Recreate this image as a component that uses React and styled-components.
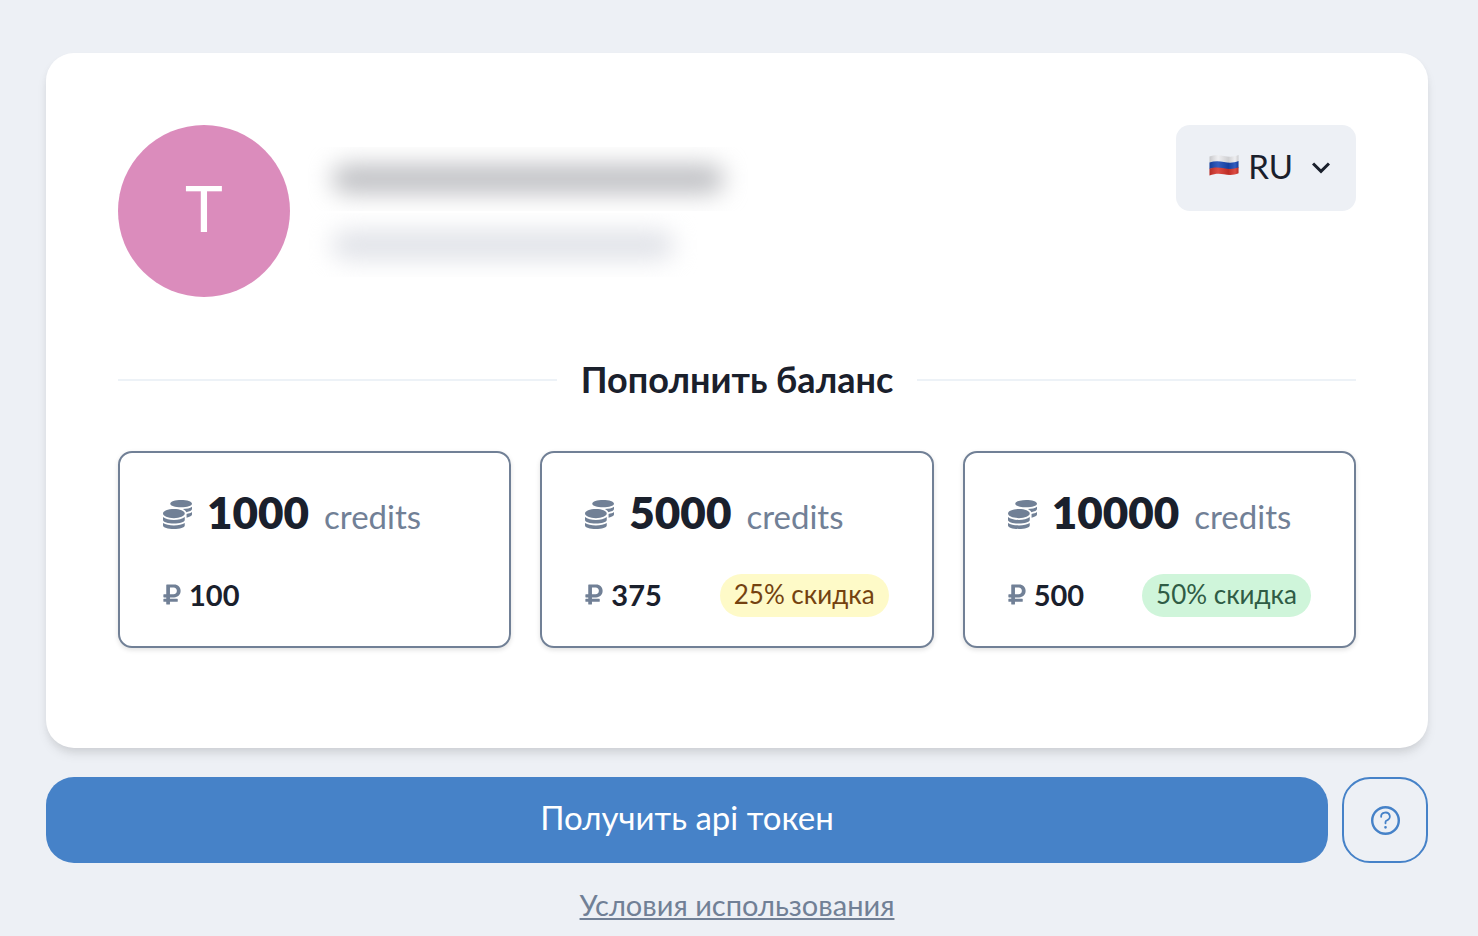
import React from "react";
import styled, { createGlobalStyle } from "styled-components";
import { FaCoins, FaRubleSign } from "react-icons/fa";

const GlobalStyle = createGlobalStyle`
  *, *::before, *::after { box-sizing: border-box; }
  body {
    margin: 0;
    background: #edf0f5;
    color: #1a202c;
    font-family: Lato, "Open Sans", sans-serif;
  }
  button { font: inherit; cursor: pointer; }
  h1, p { margin: 0; }
`;

const Page = styled.main`
  padding: 53px 50px 12px 46px;
`;

const Card = styled.section`
  padding: 72px 72px 100px;
  border-radius: 28px;
  background: #fff;
  box-shadow: 0 7px 12px -2px rgba(0, 0, 0, 0.1), 0 4px 8px -2px rgba(0, 0, 0, 0.06);
`;

const Header = styled.header`
  display: flex;
  align-items: flex-start;
  gap: 18px;
`;

const Avatar = styled.div`
  display: flex;
  align-items: center;
  justify-content: center;
  flex: none;
  width: 172px;
  height: 172px;
  padding-bottom: 6px;
  border-radius: 50%;
  background: #db8cbc;
  color: #fff;
  font-size: 64px;
  line-height: 80px;
`;

const Identity = styled.div`
  display: flex;
  flex-direction: column;
  gap: 2px;
  flex: 1;
  padding-top: 22px;
`;

const HiddenLine = styled.div`
  width: ${(p) => p.$width}px;
  max-width: 100%;
  height: 64px;
  padding: 18px 24px;
  overflow: hidden;

  &::before {
    content: "";
    display: block;
    height: 28px;
    border-radius: 14px;
    background: ${(p) => p.$tone};
    filter: blur(12px);
  }
`;

const LanguageButton = styled.button`
  display: flex;
  align-items: center;
  flex: none;
  height: 86px;
  padding: 0 17px 4px 33px;
  border: 0;
  border-radius: 14px;
  background: #edf0f5;
  color: #1a202c;
  font-size: 33px;
  line-height: 40px;
`;

const LanguageName = styled.span`
  margin: 0 10px 0 9px;
`;

const Divider = styled.div`
  display: flex;
  align-items: center;
  gap: 24px;
  margin: 60px 0 48px;

  &::before, &::after {
    content: "";
    flex: 1;
    height: 2px;
    background: #edf2f7;
  }
`;

const Title = styled.h1`
  padding-bottom: 2px;
  font-size: 36px;
  font-weight: 700;
  line-height: 44px;
`;

const Plans = styled.div`
  display: grid;
  grid-template-columns: repeat(3, 1fr);
  gap: 29px;
`;

const Plan = styled.button`
  display: flex;
  flex-direction: column;
  justify-content: space-between;
  height: 197px;
  padding: 30px 43px 29px;
  border: 2px solid #718096;
  border-radius: 14px;
  background: #fff;
  box-shadow: 0 2px 5px rgba(0, 0, 0, 0.12);
  color: #1a202c;
  text-align: left;
`;

const Amount = styled.span`
  display: flex;
  align-items: baseline;
  gap: 15px;
  font-size: 44px;
  font-weight: 800;
  line-height: 58px;

  svg { color: #718096; }
`;

const Unit = styled.span`
  color: #718096;
  font-size: 33px;
  font-weight: 400;
  line-height: 40px;
`;

const PriceRow = styled.span`
  display: flex;
  align-items: flex-start;
  justify-content: space-between;
  flex: none;
  width: 100%;
  height: 43px;
`;

const Price = styled.span`
  display: flex;
  align-items: center;
  gap: 8px;
  font-size: 29px;
  font-weight: 700;
  line-height: 41px;
`;

const Ruble = styled(FaRubleSign)`
  width: 18px;
  height: 23px;
  color: #718096;
`;

const Discount = styled.span`
  height: 43px;
  padding: 0 14px;
  border-radius: 22px;
  background: ${(p) => (p.$tone === "green" ? "#cff5da" : "#fefac8")};
  color: ${(p) => (p.$tone === "green" ? "#2f5c45" : "#744210")};
  font-size: 26px;
  line-height: 41px;
`;

const Actions = styled.div`
  display: flex;
  gap: 14px;
  margin-top: 29px;
`;

const TokenButton = styled.button`
  flex: 1;
  height: 86px;
  padding: 0 28px 6px;
  border: 0;
  border-radius: 28px;
  background: #4682c8;
  color: #fff;
  font-size: 33px;
  line-height: 40px;
`;

const HelpButton = styled.button`
  display: flex;
  align-items: center;
  justify-content: center;
  width: 86px;
  height: 86px;
  border: 2px solid #4682c8;
  border-radius: 28px;
  background: transparent;
  color: #4682c8;
`;

const Footer = styled.footer`
  margin-top: 22px;
  text-align: center;
`;

const TermsLink = styled.a`
  color: #718096;
  font-size: 29px;
  line-height: 40px;
  text-decoration: underline;
`;

function RussianFlag() {
  return (
    <svg width="30" height="26" viewBox="0 0 30 26" aria-hidden="true">
      <defs>
        <linearGradient id="flagShade" x1="0" x2="1" y1="0" y2="0">
          <stop offset="0" stopColor="#000" stopOpacity="0.16" />
          <stop offset="0.3" stopColor="#fff" stopOpacity="0.12" />
          <stop offset="0.65" stopColor="#000" stopOpacity="0.12" />
          <stop offset="0.88" stopColor="#fff" stopOpacity="0.12" />
          <stop offset="1" stopColor="#000" stopOpacity="0.14" />
        </linearGradient>
      </defs>
      <path fill="#ececef" d="M.5 3.500C5 1.800 10 2 15 3s10 1 14.500-1v7c-4.500 2-9.500 2-14.500 1S5 8.500 .5 10z" />
      <path fill="#1747b5" d="M.5 9.500C5 8 10 8 15 9s10 1 14.500-1v7c-4.500 2-9.500 2-14.500 1S5 14.500 .5 16z" />
      <path fill="#d8332a" d="M.5 15.800C5 14 10 14.300 15 15.300s10 1 14.500-1v6c-4.500 2-9.500 2-14.500 1S5 20.800 .5 22.500z" />
      <path fill="url(#flagShade)" d="M.5 3.500C5 1.800 10 2 15 3s10 1 14.500-1v18.300c-4.500 2-9.500 2-14.500 1S5 20.800 .5 22.500z" />
    </svg>
  );
}

function ChevronDown() {
  return (
    <svg width="36" height="36" viewBox="0 0 24 24" fill="currentColor" aria-hidden="true">
      <path d="M16.590 9.590L12 14.170 7.410 9.590 6 11l6 6 6-6z" />
    </svg>
  );
}

function QuestionIcon() {
  return (
    <svg width="29" height="29" viewBox="0 0 24 24" stroke="currentColor" strokeWidth="1.5" aria-hidden="true">
      <path fill="none" strokeLinecap="round" d="M8.400 9a3.600 3.300 0 1 1 4.800 2.829 1.700 1.500 0 0 0-1.200 1.415V14.250" />
      <path fill="currentColor" strokeLinecap="round" d="M12 17.250a.375.375 0 1 0 .375.375A.375.375 0 0 0 12 17.250h0" />
      <circle fill="none" strokeWidth="2" cx="12" cy="12" r="11" />
    </svg>
  );
}

const plans = [
  { credits: 1000, price: 100 },
  { credits: 5000, price: 375, discount: "25% скидка", tone: "yellow" },
  { credits: 10000, price: 500, discount: "50% скидка", tone: "green" },
];

export default function App() {
  return (
    <>
      <GlobalStyle />
      <Page>
        <Card>
          <Header>
            <Avatar>T</Avatar>
            <Identity aria-hidden="true">
              <HiddenLine $width={440} $tone="#bcbdc1" />
              <HiddenLine $width={390} $tone="#dfe1e7" />
            </Identity>
            <LanguageButton type="button" aria-haspopup="menu">
              <RussianFlag />
              <LanguageName>RU</LanguageName>
              <ChevronDown />
            </LanguageButton>
          </Header>
          <Divider>
            <Title>Пополнить баланс</Title>
          </Divider>
          <Plans>
            {plans.map((plan) => (
              <Plan key={plan.credits} type="button">
                <Amount>
                  <FaCoins size={29} aria-hidden="true" />
                  {plan.credits}
                  <Unit>credits</Unit>
                </Amount>
                <PriceRow>
                  <Price>
                    <Ruble aria-hidden="true" />
                    {plan.price}
                  </Price>
                  {plan.discount && <Discount $tone={plan.tone}>{plan.discount}</Discount>}
                </PriceRow>
              </Plan>
            ))}
          </Plans>
        </Card>
        <Actions>
          <TokenButton type="button">Получить api токен</TokenButton>
          <HelpButton type="button" aria-label="Помощь">
            <QuestionIcon />
          </HelpButton>
        </Actions>
        <Footer>
          <TermsLink href="#terms">Условия использования</TermsLink>
        </Footer>
      </Page>
    </>
  );
}
